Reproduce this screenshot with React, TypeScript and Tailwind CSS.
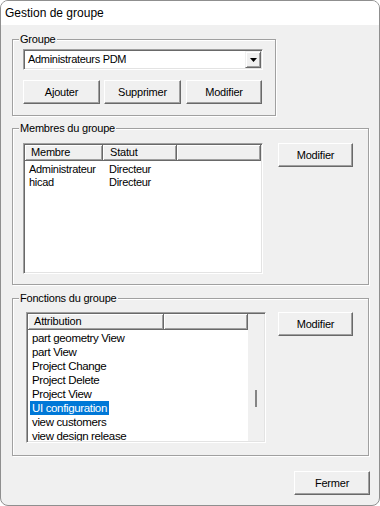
import React from "react";

function Btn({ label, className }: { label: string; className: string }) {
  return (
    <button
      className={`h-[24px] bg-[#f0f0f0] border border-white border-r-[#696969] border-b-[#696969] shadow-[inset_-1px_-1px_0_#a0a0a0] text-[11px] tracking-[-0.2px] text-black leading-none ${className}`}
    >
      {label}
    </button>
  );
}

function HeaderCell({ label, w, pl }: { label: string; w: string; pl: string }) {
  return (
    <div
      className={`h-[16px] ${w} ${pl} bg-[#f0f0f0] border-r border-b border-[#696969] shadow-[inset_1px_1px_0_#fff,inset_-1px_-1px_0_#a0a0a0] text-[11px] tracking-[-0.2px] leading-[15px] text-black overflow-hidden whitespace-nowrap`}
    >
      {label}
    </div>
  );
}

const members = [
  ["Administrateur", "Directeur"],
  ["hicad", "Directeur"],
];

const fonctions = [
  "part geometry View",
  "part View",
  "Project Change",
  "Project Delete",
  "Project View",
  "UI configuration",
  "view customers",
  "view design release",
];

export default function App() {
  return (
    <div className="w-[380px] h-[506px] font-['Liberation_Sans',Arial,sans-serif] text-black bg-white">
      <div className="w-[380px] h-[506px] flex flex-col border border-[#8f8f8f] rounded-[8px] overflow-hidden bg-[#f0f0f0]">
        {/* title bar */}
        <div className="h-[24px] bg-white flex items-center pl-[4px] text-[12px] shrink-0">
          Gestion de groupe
        </div>

        <div className="flex flex-col pl-[11px] pt-[8px]">
          {/* Groupe */}
          <fieldset className="w-[264px] border border-[#a0a0a0] shadow-[inset_1px_1px_0_#fff,1px_1px_0_#fff]">
            <legend className="ml-[6px] px-[1px] text-[11px] tracking-[-0.2px] leading-[13px] bg-[#f0f0f0]">
              Groupe
            </legend>
            <div className="ml-[10px] mt-[3px] w-[240px] h-[21px] bg-white border border-[#a0a0a0] border-r-white border-b-white shadow-[inset_1px_1px_0_#696969,inset_-1px_-1px_0_#e3e3e3] flex items-center">
              <div className="flex-1 pl-[4px] text-[11px] tracking-[-0.3px] leading-none">Administrateurs PDM</div>
              <div className="w-[16px] h-[17px] mr-[1px] bg-[#f0f0f0] border border-[#f0f0f0] border-r-[#696969] border-b-[#696969] shadow-[inset_1px_1px_0_#fff,inset_-1px_-1px_0_#a0a0a0] flex items-center justify-center">
                <svg width="7" height="4" viewBox="0 0 7 4">
                  <polygon points="0,0 7,0 3.5,4" fill="#000" />
                </svg>
              </div>
            </div>
            <div className="ml-[10px] mt-[10px] mb-[11px] flex">
              <Btn label="Ajouter" className="w-[77px]" />
              <Btn label="Supprimer" className="w-[77px] ml-[4px]" />
              <Btn label="Modifier" className="w-[76px] ml-[5px]" />
            </div>
          </fieldset>

          {/* Membres du groupe */}
          <fieldset className="mt-[6px] w-[357px] border border-[#a0a0a0] shadow-[inset_1px_1px_0_#fff,1px_1px_0_#fff]">
            <legend className="ml-[6px] px-[1px] text-[11px] tracking-[-0.2px] leading-[13px] bg-[#f0f0f0]">
              Membres du groupe
            </legend>
            <div className="ml-[10px] mt-[8px] mb-[10px] flex items-start">
              <div className="w-[240px] h-[131px] bg-white border border-[#a0a0a0] border-r-white border-b-white shadow-[inset_1px_1px_0_#696969,inset_-1px_-1px_0_#e3e3e3] p-[1px] overflow-hidden">
                <div className="flex">
                  <HeaderCell label="Membre" w="w-[78px]" pl="pl-[6px]" />
                  <HeaderCell label="Statut" w="w-[74px]" pl="pl-[7px]" />
                  <HeaderCell label="" w="w-[84px]" pl="pl-[4px]" />
                </div>
                <div className="pt-[2px]">
                  {members.map(([m, s]) => (
                    <div key={m} className="flex h-[13px] text-[11px] tracking-[-0.3px] leading-[13px] whitespace-nowrap">
                      <div className="w-[78px] pl-[4px]">{m}</div>
                      <div className="w-[74px] pl-[6px]">{s}</div>
                    </div>
                  ))}
                </div>
              </div>
              <Btn label="Modifier" className="w-[75px] ml-[15px]" />
            </div>
          </fieldset>

          {/* Fonctions du groupe */}
          <fieldset className="mt-[7px] w-[357px] border border-[#a0a0a0] shadow-[inset_1px_1px_0_#fff,1px_1px_0_#fff]">
            <legend className="ml-[6px] px-[1px] text-[11px] tracking-[-0.2px] leading-[13px] bg-[#f0f0f0]">
              Fonctions du groupe
            </legend>
            <div className="ml-[13px] mt-[7px] mb-[12px] flex items-start">
              <div className="w-[240px] h-[131px] bg-white border border-[#a0a0a0] border-r-white border-b-white shadow-[inset_1px_1px_0_#696969,inset_-1px_-1px_0_#e3e3e3] p-[1px] overflow-hidden flex">
                <div className="w-[220px] h-[127px] overflow-hidden">
                  <div className="flex">
                    <HeaderCell label="Attribution" w="w-[136px]" pl="pl-[6px]" />
                    <HeaderCell label="" w="w-[84px]" pl="pl-[4px]" />
                  </div>
                  <div className="pt-[1px]">
                    {fonctions.map((f) => (
                      <div key={f} className="h-[14px] pl-[2px] flex">
                        <div
                          className={`px-[2px] text-[11.5px] tracking-[-0.35px] leading-[14px] whitespace-nowrap ${
                            f === "UI configuration" ? "bg-[#0078d7] text-white" : "text-black"
                          }`}
                        >
                          {f}
                        </div>
                      </div>
                    ))}
                  </div>
                </div>
                <div className="w-[16px] h-[127px] bg-[#f0f0f0] flex justify-center pt-[76px]">
                  <div className="w-[2px] h-[17px] bg-[#858585]" />
                </div>
              </div>
              <Btn label="Modifier" className="w-[75px] ml-[12px]" />
            </div>
          </fieldset>

          <div className="flex justify-end pr-[9px] mt-[15px]">
            <Btn label="Fermer" className="w-[76px] h-[23px]" />
          </div>
        </div>
      </div>
    </div>
  );
}
